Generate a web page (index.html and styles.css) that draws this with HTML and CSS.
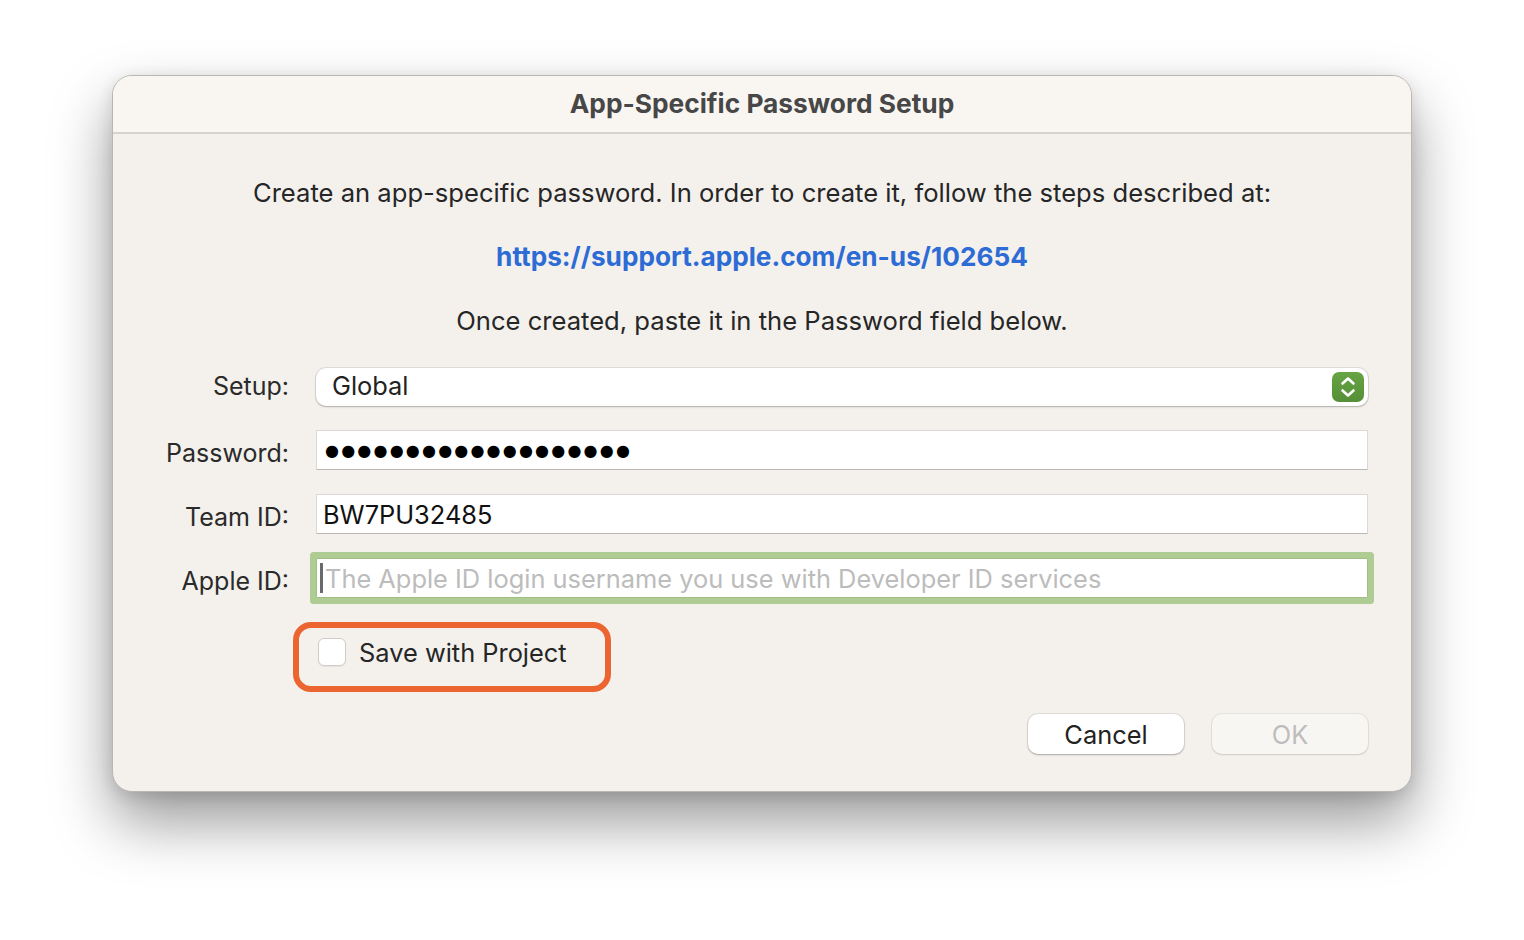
FILE: index.html
```html
<!DOCTYPE html>
<html>
<head>
<meta charset="utf-8">
<link rel="stylesheet" href="styles.css">
</head>
<body>
<div class="window">
  <div class="titlebar">App-Specific Password Setup</div>
  <div class="content">
    <p class="msg">Create an app-specific password. In order to create it, follow the steps described at:</p>
    <p class="msg link">https://support.apple.com/en-us/102654</p>
    <p class="msg">Once created, paste it in the Password field below.</p>
    <div class="form">
      <label class="lbl lbl-popup">Setup:</label>
      <div class="popup">
        <span class="popup-text">Global</span>
        <span class="stepper">
          <svg width="32" height="30" viewBox="0 0 32 30">
            <path d="M10.5 11.5 L16 6.5 L21.5 11.5" fill="none" stroke="#fff" stroke-width="2.6" stroke-linecap="round" stroke-linejoin="round"/>
            <path d="M10.5 18.5 L16 23.5 L21.5 18.5" fill="none" stroke="#fff" stroke-width="2.6" stroke-linecap="round" stroke-linejoin="round"/>
          </svg>
        </span>
      </div>
      <label class="lbl">Password:</label>
      <div class="field"><span class="dots">●●●●●●●●●●●●●●●●●●●</span></div>
      <label class="lbl">Team ID:</label>
      <div class="field"><span class="val">BW7PU32485</span></div>
      <label class="lbl">Apple ID:</label>
      <div class="field focused"><span class="caret"></span><span class="placeholder">The Apple ID login username you use with Developer ID services</span></div>
      <div class="spacer"></div>
      <div class="check-row">
        <span class="checkbox"></span>
        <span class="check-text">Save with Project</span>
      </div>
    </div>
    <div class="buttons">
      <div class="btn">Cancel</div>
      <div class="btn disabled">OK</div>
    </div>
  </div>
</div>
</body>
</html>
```

FILE: styles.css
```css
html, body {
  margin: 0;
  padding: 0;
  background: #ffffff;
  width: 1524px;
  height: 940px;
  overflow: hidden;
}
body {
  font-family: Inter, "Noto Sans", sans-serif;
  padding-top: 75px;
  box-sizing: border-box;
}
.window {
  margin-left: 112px;
  width: 1300px;
  height: 717px;
  box-sizing: border-box;
  background: #f4f1ed;
  border-radius: 20px;
  border: 1px solid #b9b7b4;
  box-shadow: 0 30px 60px rgba(0,0,0,0.40), 0 4px 16px rgba(0,0,0,0.12);
  overflow: hidden;
}
.titlebar {
  height: 54px;
  padding-bottom: 2px;
  background: #f9f6f2;
  border-bottom: 2px solid #d7d4d0;
  display: flex;
  align-items: center;
  justify-content: center;
  font-weight: 700;
  font-size: 26.3px;
  color: #474747;
}
.content {
  padding: 43px 43px 0 0;
}
.msg {
  margin: 0 0 32px 0;
  text-align: center;
  font-size: 25.6px;
  line-height: 32px;
  color: #262626;
  padding-left: 43px;
}
.msg.link {
  font-weight: 700;
  font-size: 26.2px;
  color: #2d6bd5;
}
.form {
  margin-top: -1px;
  display: grid;
  grid-template-columns: 176px 1052px;
  column-gap: 27px;
  row-gap: 24px;
  align-items: center;
}
.lbl {
  text-align: right;
  font-size: 25px;
  color: #2a2a2a;
  line-height: 32px;
  padding-top: 6px;
}
.lbl.lbl-popup {
  padding-top: 0;
  padding-bottom: 2px;
}
.popup {
  height: 38px;
  box-sizing: border-box;
  background: #ffffff;
  border-radius: 10px;
  box-shadow: 0 0 0 1px rgba(0,0,0,0.08), 0 1px 2px rgba(0,0,0,0.22);
  display: flex;
  align-items: center;
  justify-content: space-between;
  padding: 0 4px 0 16px;
}
.popup-text {
  font-size: 25.4px;
  color: #222;
  padding-bottom: 3px;
}
.stepper {
  width: 32px;
  height: 30px;
  border-radius: 7px;
  background: linear-gradient(#66a444, #558f37);
  display: flex;
}
.field {
  height: 40px;
  box-sizing: border-box;
  background: #ffffff;
  border: 1px solid #dddad6;
  border-bottom-color: #bbb8b4;
  display: flex;
  align-items: center;
  padding-left: 6px;
}
.dots {
  font-family: "DejaVu Sans", sans-serif;
  font-size: 16px;
  letter-spacing: 2.2px;
  color: #000;
  padding-left: 2px;
}
.val {
  font-size: 25.4px;
  color: #111;
}
.field.focused {
  box-shadow: 0 0 0 6px #b0cc95;
  border-color: #9fbf85;
  border-radius: 1px;
  padding-left: 3px;
  height: 40px;
}
.caret {
  width: 3px;
  height: 30px;
  background: #6a6a6a;
  margin-right: 2px;
}
.placeholder {
  font-size: 25.4px;
  color: #bcbcbc;
}
.check-row {
  position: relative;
  display: flex;
  align-items: center;
  gap: 13px;
  height: 28px;
  margin-top: 16px;
  padding-left: 2px;
}
.check-row::after {
  content: "";
  position: absolute;
  left: -23px;
  top: -16px;
  width: 306px;
  height: 58px;
  border: 6px solid #ec6531;
  border-radius: 18px;
}
.checkbox {
  width: 26px;
  height: 26px;
  border-radius: 6px;
  background: #fff;
  border: 1px solid #cfcdca;
  box-shadow: 0 1px 1px rgba(0,0,0,0.06);
}
.check-text {
  font-size: 25.4px;
  color: #262626;
}
.buttons {
  display: flex;
  justify-content: flex-end;
  gap: 28px;
  margin-top: 48px;
}
.btn {
  width: 156px;
  height: 40px;
  box-sizing: border-box;
  border-radius: 10px;
  background: #ffffff;
  box-shadow: 0 0 0 1px rgba(0,0,0,0.07), 0 1px 2px rgba(0,0,0,0.25);
  display: flex;
  align-items: center;
  justify-content: center;
  font-size: 25.4px;
  color: #222;
}
.btn.disabled {
  background: #f8f6f3;
  color: #bdbdbd;
  box-shadow: 0 0 0 1px rgba(0,0,0,0.05), 0 1px 2px rgba(0,0,0,0.12);
}
```
